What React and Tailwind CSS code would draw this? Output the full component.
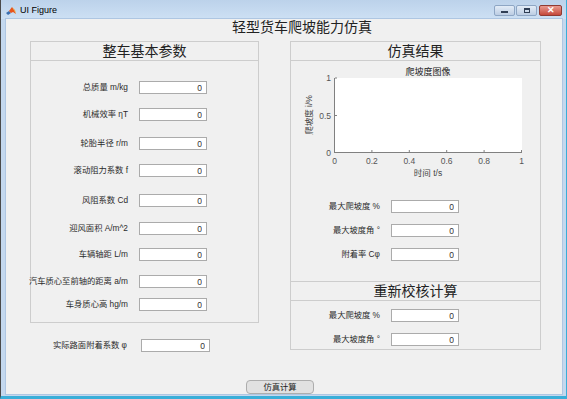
import React from "react";

const leftRows = [
  ["总质量 m/kg", "mt-[20px]"],
  ["机械效率 ηT", "mt-[14px]"],
  ["轮胎半径 r/m", "mt-[16px]"],
  ["滚动阻力系数 f", "mt-[14px]"],
  ["风阻系数 Cd", "mt-[17px]"],
  ["迎风面积 A/m^2", "mt-[15px]"],
  ["车辆轴距 L/m", "mt-[13px]"],
  ["汽车质心至前轴的距离 a/m", "mt-[14px]"],
  ["车身质心高 hg/m", "mt-[10px]"],
];

const resultRows = [
  ["最大爬坡度 %", "mt-[14px]"],
  ["最大坡度角 °", "mt-[11px]"],
  ["附着率 Cφ", "mt-[11px]"],
];

const checkRows = [
  ["最大爬坡度 %", "mt-[8px]"],
  ["最大坡度角 °", "mt-[11px]"],
];

const NumBox = ({ className = "" }) => (
  <input
    readOnly
    value="0"
    className={`w-[68px] h-[13px] bg-white border border-[#ababab] text-right pr-[4px] text-[8.5px] text-[#333] outline-none ${className}`}
  />
);

const Row = ({ label, mt, labelW }) => (
  <div className={`flex items-center ${mt}`}>
    <div className={`${labelW} flex justify-end whitespace-nowrap text-[8.3px] text-[#2b2b2b]`}>
      <span className="shrink-0">{label}</span>
    </div>
    <NumBox className="ml-[11px]" />
  </div>
);

const PanelHeader = ({ children, className = "" }) => (
  <div className={`h-[18px] flex items-center justify-center text-[14px] leading-none text-[#222] ${className}`}>
    {children}
  </div>
);

const Chart = () => {
  const x0 = 43, x1 = 231, y0 = 17, y1 = 92;
  const xt = [0, 0.2, 0.4, 0.6, 0.8, 1];
  return (
    <svg width="249" height="125" className="block">
      <text x="137" y="14" textAnchor="middle" fontSize="9" fill="#222">
        爬坡度图像
      </text>
      <rect x={x0} y={y0} width={x1 - x0} height={y1 - y0} fill="#fff" />
      <line x1={x0 + 0.5} y1={y0} x2={x0 + 0.5} y2={y1} stroke="#808080" />
      <line x1={x0} y1={y1 - 0.5} x2={x1} y2={y1 - 0.5} stroke="#808080" />
      {xt.map((v) => {
        const x = x0 + 0.5 + v * (x1 - x0 - 1);
        return (
          <g key={v}>
            <line x1={x} y1={y1 - 1} x2={x} y2={y1 - 3} stroke="#808080" />
            <text x={x} y="103" textAnchor="middle" fontSize="8.5" fill="#555">
              {v}
            </text>
          </g>
        );
      })}
      {[
        [1, y0],
        [0.5, (y0 + y1) / 2],
        [0, y1 - 0.5],
      ].map(([v, y]) => (
        <g key={v}>
          <line x1={x0 + 1} y1={y} x2={x0 + 3} y2={y} stroke="#808080" />
          <text x="40" y={y + 3} textAnchor="end" fontSize="8.5" fill="#555">
            {v}
          </text>
        </g>
      ))}
      <text x="137" y="115" textAnchor="middle" fontSize="8.5" fill="#444">
        时间 t/s
      </text>
      <text
        x="0"
        y="0"
        transform="translate(21 54) rotate(-90)"
        textAnchor="middle"
        fontSize="8.5"
        fill="#444"
      >
        爬坡度 i/%
      </text>
    </svg>
  );
};

const MatlabIcon = () => (
  <svg width="10" height="10" viewBox="0 0 10 10">
    <polygon points="0,7 3,5 5,7 2,9" fill="#3a6fb0" />
    <polygon points="3,5 6,1 8,4 10,8 7,6 5,7" fill="#e8541c" />
    <polygon points="6,1 8,4 10,8 9,4" fill="#f7a21b" />
  </svg>
);

export default function App() {
  return (
    <div className="w-[567px] h-[399px] flex flex-col bg-[#c4d8ee] border-l border-l-[#4a4a4a] border-r border-r-[#3aaed8] border-b-[3px] border-b-[#3aaed8] font-['Liberation_Sans','Noto_Sans_CJK_SC',sans-serif] overflow-hidden">
      {/* title bar */}
      <div className="h-[19px] flex items-start bg-gradient-to-b from-[#bcd2ea] to-[#cde0f4]">
        <div className="ml-[5px] mt-[6px]">
          <MatlabIcon />
        </div>
        <span className="ml-[4px] mt-[5px] text-[9px] leading-[10px] text-black">UI Figure</span>
        <div className="ml-auto mr-[4px] mt-[5px] flex gap-[1px]">
          <div className="w-[21px] h-[11px] rounded-[2px] border border-[#8ea6c4] bg-gradient-to-b from-[#e3ecf7] to-[#bccde3] flex items-end justify-center pb-[2px]">
            <div className="w-[7px] h-[2px] bg-[#2f3e55]" />
          </div>
          <div className="w-[21px] h-[11px] rounded-[2px] border border-[#8ea6c4] bg-gradient-to-b from-[#e3ecf7] to-[#bccde3] flex items-center justify-center">
            <div className="w-[6px] h-[5px] border border-[#2f3e55] border-t-2" />
          </div>
          <div className="ml-[1px] w-[23px] h-[11px] rounded-[2px] border border-[#8f3b33] bg-gradient-to-b from-[#e8998f] to-[#c4473b] flex items-center justify-center text-white text-[9px] font-bold leading-none">
            ✕
          </div>
        </div>
      </div>

      {/* content */}
      <div className="ml-[5px] w-[556px] h-[375px] bg-[#f0f0f0] flex flex-col shadow-[0_0_0_1px_#aec6e2]">
        <div className="h-[22px] flex justify-center pl-[36px]">
          <span className="mt-[1px] text-[14px] leading-[14px] text-[#222]">轻型货车爬坡能力仿真</span>
        </div>

        <div className="flex items-start">
          <div className="ml-[24px] w-[229px] flex flex-col">
            <div className="h-[282px] border border-[#cdcdcd] flex flex-col">
              <PanelHeader className="border-b border-[#cdcdcd] box-content">整车基本参数</PanelHeader>
              {leftRows.map(([label, mt]) => (
                <Row key={label} label={label} mt={mt} labelW="w-[97px]" />
              ))}
            </div>
            <div className="mt-[16px] flex items-center">
              <div className="w-[97px] flex justify-end whitespace-nowrap text-[8.3px] text-[#2b2b2b]">
                <span className="shrink-0">实际路面附着系数 φ</span>
              </div>
              <NumBox className="ml-[14px] w-[69px]" />
            </div>
          </div>

          <div className="ml-[31px] w-[251px] h-[309px] border border-[#cdcdcd] flex flex-col">
            <PanelHeader className="border-b border-[#cdcdcd] box-content">仿真结果</PanelHeader>
            <Chart />
            {resultRows.map(([label, mt]) => (
              <Row key={label} label={label} mt={mt} labelW="w-[89px]" />
            ))}
            <PanelHeader className="mt-[20px] border-y border-[#cdcdcd] box-content">重新校核计算</PanelHeader>
            {checkRows.map(([label, mt]) => (
              <Row key={label + mt} label={label} mt={mt} labelW="w-[89px]" />
            ))}
          </div>
        </div>

        <div className="mt-auto flex">
          <button className="ml-[240px] w-[68px] h-[14px] rounded-[4px] border border-[#adadad] bg-[#e1e1e1] text-[8.3px] leading-none text-[#222] flex items-center justify-center">
            仿真计算
          </button>
        </div>
      </div>
    </div>
  );
}
